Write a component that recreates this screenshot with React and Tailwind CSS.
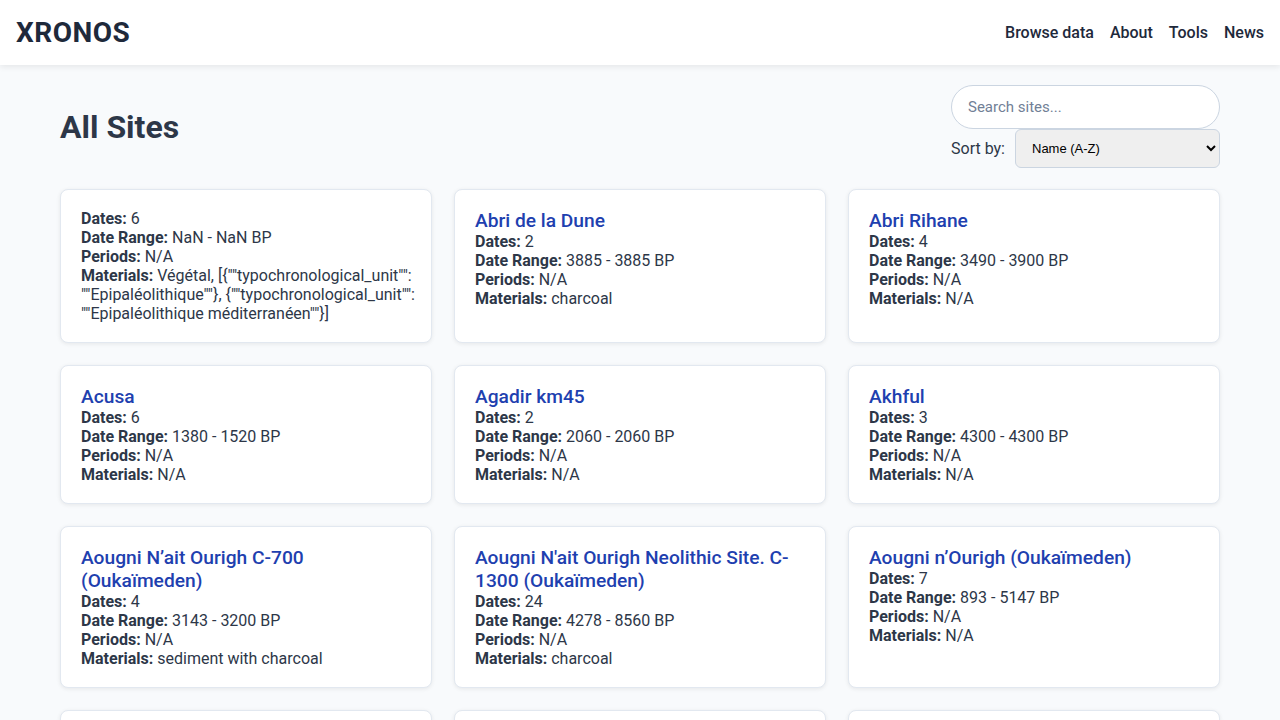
import React from "react";

const sites = [
  {
    name: "",
    dates: 6,
    range: "NaN - NaN BP",
    periods: "N/A",
    materials:
      'Végétal, [{""typochronological_unit"": ""Epipaléolithique""}, {""typochronological_unit"": ""Epipaléolithique méditerranéen""}]',
  },
  { name: "Abri de la Dune", dates: 2, range: "3885 - 3885 BP", periods: "N/A", materials: "charcoal" },
  { name: "Abri Rihane", dates: 4, range: "3490 - 3900 BP", periods: "N/A", materials: "N/A" },
  { name: "Acusa", dates: 6, range: "1380 - 1520 BP", periods: "N/A", materials: "N/A" },
  { name: "Agadir km45", dates: 2, range: "2060 - 2060 BP", periods: "N/A", materials: "N/A" },
  { name: "Akhful", dates: 3, range: "4300 - 4300 BP", periods: "N/A", materials: "N/A" },
  {
    name: "Aougni N’ait Ourigh C-700 (Oukaïmeden)",
    dates: 4,
    range: "3143 - 3200 BP",
    periods: "N/A",
    materials: "sediment with charcoal",
  },
  {
    name: "Aougni N'ait Ourigh Neolithic Site. C-1300 (Oukaïmeden)",
    dates: 24,
    range: "4278 - 8560 BP",
    periods: "N/A",
    materials: "charcoal",
  },
  { name: "Aougni n’Ourigh (Oukaïmeden)", dates: 7, range: "893 - 5147 BP", periods: "N/A", materials: "N/A" },
  { name: "Azrou", dates: 3, range: "1200 - 1500 BP", periods: "N/A", materials: "N/A" },
  { name: "Bab el Mandeb", dates: 2, range: "5000 - 5100 BP", periods: "N/A", materials: "N/A" },
  { name: "Balearic Cave", dates: 5, range: "3100 - 3600 BP", periods: "N/A", materials: "N/A" },
];

const Row = ({ label, value }) => (
  <p className="text-[16px] leading-[19px]">
    <strong className="font-bold">{label}:</strong> {value}
  </p>
);

const SiteCard = ({ site }) => (
  <div className="bg-white rounded-lg border border-[#e2e8f0] shadow-[0_1px_4px_rgba(0,0,0,0.08)] py-[19px] pl-5 pr-[14px] text-[#2d3748]">
    <h3 className="text-[19.2px] leading-[23px] font-medium text-[#1e40af] break-words">{site.name}</h3>
    <Row label="Dates" value={site.dates} />
    <Row label="Date Range" value={site.range} />
    <Row label="Periods" value={site.periods} />
    <Row label="Materials" value={site.materials} />
  </div>
);

export default function App() {
  return (
    <div className="min-h-screen bg-[#f8fafc] font-['Roboto',sans-serif] text-[#2d3748]">
      <header className="bg-white h-[65px] px-4 flex items-center justify-between shadow-[0_2px_6px_rgba(0,0,0,0.08)] relative z-10">
        <h1 className="text-[28px] font-bold tracking-[0.5px] text-[#1e293b]">XRONOS</h1>
        <nav className="flex gap-4 text-[16px] font-medium text-[#1e293b]">
          <a href="#">Browse data</a>
          <a href="#">About</a>
          <a href="#">Tools</a>
          <a href="#">News</a>
        </nav>
      </header>

      <main className="px-[60px]">
        <div className="flex items-center justify-between pt-5 pb-[21px]">
          <h2 className="text-[32px] font-bold text-[#2d3748]">All Sites</h2>
          <div className="flex flex-col items-end w-[269px]">
            <input
              type="text"
              placeholder="Search sites..."
              className="w-full h-[44px] px-4 rounded-full border border-[#cbd5e1] bg-white text-[15px] placeholder-[#718096] outline-none"
            />
            <div className="flex items-center justify-between w-full">
              <label className="text-[16px] text-[#2d3748]">Sort by:</label>
              <select className="w-[205px] h-[39px] px-3 rounded-md border border-[#cbd5e1] bg-[#efefef] text-[13px] font-['Liberation_Sans',sans-serif] text-black">
                <option>Name (A-Z)</option>
                <option>Name (Z-A)</option>
                <option>Most dates</option>
              </select>
            </div>
          </div>
        </div>

        <div className="grid grid-cols-3 gap-[22px] pb-8">
          {sites.map((s, i) => (
            <SiteCard key={i} site={s} />
          ))}
        </div>
      </main>
    </div>
  );
}
